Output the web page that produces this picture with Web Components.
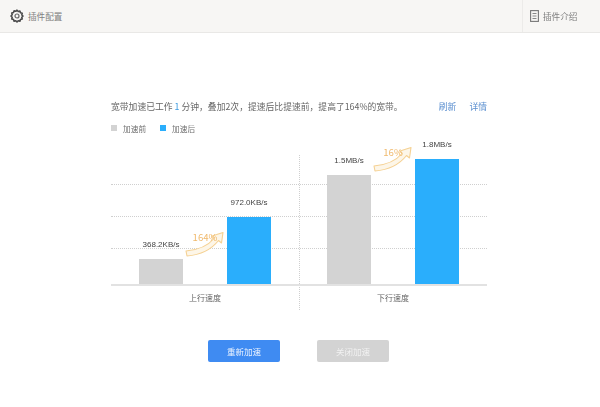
<!DOCTYPE html>
<html lang="zh">
<head>
<meta charset="utf-8">
<title>插件配置</title>
<style>
  html, body { margin: 0; background: #fff; }
  body { font-family: "Noto Sans CJK SC", "Noto Sans", sans-serif; color: #666; width: 600px; height: 407px; overflow: hidden; }
</style>
</head>
<body>
<plugin-page>
  <plugin-header slot="header"></plugin-header>
  <speed-summary></speed-summary>
  <speed-legend></speed-legend>
  <speed-chart>
    <speed-group before="25" after="67" before-label="368.2KB/s" after-label="972.0KB/s" percent="164%" arrow-top="75">上行速度</speed-group>
    <speed-group before="109" after="125" before-label="1.5MB/s" after-label="1.8MB/s" percent="16%" arrow-top="-10">下行速度</speed-group>
  </speed-chart>
  <action-buttons></action-buttons>
</plugin-page>

<script>
class PluginPage extends HTMLElement {
  constructor () {
    super()
    this.attachShadow({ mode: 'open' }).innerHTML = /*html*/`
      <style>
        :host { display: block; filter: blur(.5px); }
        main { padding: 0 113px 0 111px; display: flex; flex-direction: column; }
      </style>
      <slot name="header"></slot>
      <main><slot></slot></main>
    `
  }
}

class PluginHeader extends HTMLElement {
  constructor () {
    super()
    this.attachShadow({ mode: 'open' }).innerHTML = /*html*/`
      <style>
        :host {
          display: flex; align-items: center; justify-content: space-between;
          box-sizing: border-box; height: 33px; background: #f7f6f4; border-bottom: 1px solid #e9e8e6;
          font-size: 8.6px; color: #808080;
        }
        .item { display: flex; align-items: center; gap: 4px; }
        .config { padding-left: 10px; }
        .intro { height: 32px; width: 78px; box-sizing: border-box; padding-left: 7px; border-left: 1px solid #ecebe9; }
        svg { display: block; }
      </style>
      <div class="item config">
        <svg width="14" height="14" viewBox="0 0 14 14">
          <path d="M7 1.2l1.2 1.3 1.7-.4.6 1.6 1.7.6-.4 1.7L13 7l-1.2 1.2.4 1.7-1.7.6-.6 1.6-1.7-.4L7 13l-1.2-1.3-1.7.4-.6-1.6-1.7-.6.4-1.7L1 7l1.2-1.2-.4-1.7 1.7-.6.6-1.6 1.7.4z" fill="none" stroke="#4c4c4c" stroke-width="1.6" stroke-linejoin="round"/>
          <circle cx="7" cy="7" r="2" fill="none" stroke="#666" stroke-width="1.2"/>
        </svg>
        <span>插件配置</span>
      </div>
      <div class="item intro">
        <svg width="9" height="12" viewBox="0 0 9 12">
          <rect x=".6" y=".6" width="7.8" height="10.8" fill="none" stroke="#777" stroke-width="1.1"/>
          <path d="M2.5 3.5h4M2.5 6h4M2.5 8.5h4" stroke="#888" stroke-width="1"/>
        </svg>
        <span>插件介绍</span>
      </div>
    `
  }
}

class SpeedSummary extends HTMLElement {
  constructor () {
    super()
    this.attachShadow({ mode: 'open' }).innerHTML = /*html*/`
      <style>
        :host {
          display: flex; justify-content: space-between; align-items: center;
          margin-top: 65px; height: 16px; font-size: 8.8px; color: #666; white-space: nowrap;
        }
        b { font-weight: 400; color: #3d9be0; }
        u { text-decoration: none; font-family: "Noto Sans CJK TC", sans-serif; }
        nav { display: flex; gap: 13px; font-size: 8.8px; color: #5b8fd0; }
      </style>
      <span>宽带加速已工作 <b>1</b> 分钟<u>，</u>叠加2次<u>，</u>提速后比提速前<u>，</u>提高了164%的宽带。</span>
      <nav><span>刷新</span><span>详情</span></nav>
    `
  }
}

class SpeedLegend extends HTMLElement {
  constructor () {
    super()
    this.attachShadow({ mode: 'open' }).innerHTML = /*html*/`
      <style>
        :host { display: flex; gap: 14px; margin-top: 7px; height: 14px; align-items: center; font-size: 7.7px; color: #707070; }
        span { display: flex; align-items: center; gap: 6px; }
        i { width: 6px; height: 6px; background: #d3d3d3; }
        .after i { background: #2aaefc; }
      </style>
      <span><i></i>加速前</span>
      <span class="after"><i></i>加速后</span>
    `
  }
}

class SpeedChart extends HTMLElement {
  constructor () {
    super()
    this.attachShadow({ mode: 'open' }).innerHTML = /*html*/`
      <style>
        :host { display: grid; grid-template-columns: 188px 188px; position: relative; margin-top: 20px; }
        .grid { position: absolute; left: 0; right: 0; top: 29px; display: flex; flex-direction: column; gap: 31px; }
        .grid i { display: block; border-top: 1px dotted #cfcfcf; }
        .divider { position: absolute; left: 188px; top: 0; height: 155px; border-left: 1px dotted #cfcfcf; }
        ::slotted(speed-group) { position: relative; }
      </style>
      <div class="grid"><i></i><i></i><i></i></div>
      <div class="divider"></div>
      <slot></slot>
    `
  }
}

class SpeedGroup extends HTMLElement {
  connectedCallback () {
    const a = n => this.getAttribute(n)
    this.attachShadow({ mode: 'open' }).innerHTML = /*html*/`
      <style>
        :host { display: block; }
        .plot {
          height: 129px; display: flex; justify-content: center; align-items: flex-end; gap: 44px;
          border-bottom: 2px solid #e2e2e2;
        }
        .col { width: 44px; display: flex; flex-direction: column; align-items: center; }
        .val { font-family: "Liberation Sans", sans-serif; font-size: 8px; line-height: 12px; margin-bottom: 8px; color: #444; white-space: nowrap; }
        .bar { width: 44px; background: #d3d3d3; }
        .after .bar { background: #2aaefc; }
        .name { text-align: center; font-size: 8px; line-height: 24px; color: #666; }
        .arrow { position: absolute; left: 74px; width: 40px; height: 28px; top: ${a('arrow-top')}px; }
        .arrow svg { display: block; }
        .arrow span {
          position: absolute; left: 0; right: 0; top: 1px; text-align: center;
          font-size: 9.6px; line-height: 13px; color: #f0b96c;
        }
      </style>
      <div class="plot">
        <div class="col"><div class="val">${a('before-label')}</div><div class="bar" style="height:${a('before')}px"></div></div>
        <div class="col after"><div class="val">${a('after-label')}</div><div class="bar" style="height:${a('after')}px"></div></div>
      </div>
      <div class="name"><slot></slot></div>
      <div class="arrow">
        <svg width="40" height="28" viewBox="0 0 40 28">
          <path d="M1 21C12 20 22 17 29 8.5L27 6 38 2.5 36.5 13 33.5 10.5C26 20 14 25 2 26Z" fill="#fdf6e8" stroke="#f5d193" stroke-width="1.1" stroke-linejoin="round"/>
        </svg>
        <span>${a('percent')}</span>
      </div>
    `
  }
}

class ActionButtons extends HTMLElement {
  constructor () {
    super()
    this.attachShadow({ mode: 'open' }).innerHTML = /*html*/`
      <style>
        :host { display: flex; gap: 37px; margin-top: 30px; padding-left: 97px; }
        span {
          width: 72px; height: 22px; border-radius: 2px; background: #3f8bf2; color: #eaf2ff;
          display: flex; align-items: center; justify-content: center; font-size: 8.5px;
        }
        .off { background: #d3d3d3; color: #f1f1f1; }
      </style>
      <span>重新加速</span>
      <span class="off">关闭加速</span>
    `
  }
}

customElements.define('plugin-page', PluginPage)
customElements.define('plugin-header', PluginHeader)
customElements.define('speed-summary', SpeedSummary)
customElements.define('speed-legend', SpeedLegend)
customElements.define('speed-chart', SpeedChart)
customElements.define('speed-group', SpeedGroup)
customElements.define('action-buttons', ActionButtons)
</script>
</body>
</html>
